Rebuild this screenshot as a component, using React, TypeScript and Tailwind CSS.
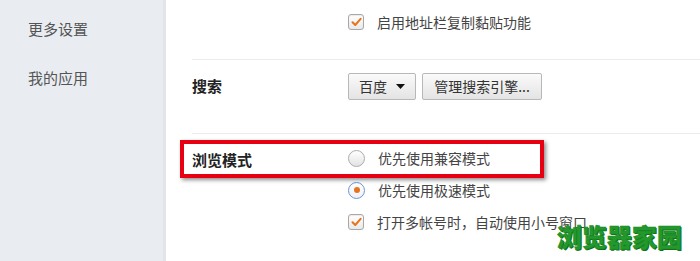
import React from 'react';

const font = { fontFamily: '"Noto Sans CJK SC", "Noto Sans", sans-serif' };

const CheckBox = () => (
  <span className="flex h-[16px] w-[16px] items-center justify-center rounded-[3px] border border-[#a8a8a8] bg-gradient-to-b from-[#ffffff] to-[#e9e9e9] shadow-[inset_0_1px_1px_rgba(0,0,0,0.08)]">
    <svg width="11" height="10" viewBox="0 0 11 10">
      <path d="M1.5 5.2 L4.3 8 L9.6 1.8" fill="none" stroke="#e8731e" strokeWidth="2" strokeLinecap="round" strokeLinejoin="round" />
    </svg>
  </span>
);

const Radio = ({ checked }: { checked?: boolean }) => (
  <span
    className={
      checked
        ? 'flex h-[17px] w-[17px] items-center justify-center rounded-full border border-[#6f93d6] bg-gradient-to-b from-[#ffffff] to-[#edf1f7]'
        : 'flex h-[17px] w-[17px] items-center justify-center rounded-full border border-[#ababab] bg-gradient-to-b from-[#ffffff] to-[#e3e3e3]'
    }
  >
    {checked && <span className="h-[6px] w-[6px] rounded-full bg-[#e8731e]" />}
  </span>
);

const Option = ({ control, text }: { control: React.ReactNode; text: string }) => (
  <div className="flex h-[32px] items-center">
    {control}
    <span className="ml-[13px] text-[14px] text-[#444]">{text}</span>
  </div>
);

export default function App() {
  return (
    <div className="relative flex h-[261px] w-[700px] overflow-hidden bg-white" style={font}>
      <aside className="w-[166px] shrink-0 border-r-[3px] border-[#e1e5ea] bg-[#e9edf2]">
        <div className="pl-[28px] pt-[18px] text-[15px] leading-[22px] text-[#555]">更多设置</div>
        <div className="pl-[28px] pt-[27px] text-[15px] leading-[22px] text-[#555]">我的应用</div>
      </aside>

      <main className="flex-1 pl-[26px]">
        <section className="flex h-[60px] border-b border-[#ececec]">
          <div className="w-[156px]" />
          <div className="pt-[6px]">
            <Option control={<CheckBox />} text="启用地址栏复制黏贴功能" />
          </div>
        </section>

        <section className="flex h-[74px] border-b border-[#ececec] pt-[13px]">
          <div className="flex h-[27px] w-[156px] items-center text-[15px] font-bold text-[#222]">搜索</div>
          <div className="flex gap-[6px]">
            <button className="flex h-[27px] w-[68px] items-center justify-center gap-[9px] rounded-[2px] border border-[#b8b8b8] bg-gradient-to-b from-[#fafafa] to-[#e4e4e4] text-[14px] text-[#333]">
              百度
              <svg width="9" height="5" viewBox="0 0 9 5">
                <path d="M0 0 L9 0 L4.5 5 Z" fill="#111" />
              </svg>
            </button>
            <button className="flex h-[27px] w-[120px] items-center justify-center rounded-[2px] border border-[#b8b8b8] bg-gradient-to-b from-[#fafafa] to-[#e4e4e4] text-[14px] text-[#333]">
              管理搜索引擎...
            </button>
          </div>
        </section>

        <section className="relative flex pt-[8px]">
          <div className="flex h-[32px] w-[156px] items-center pt-[5px] text-[15px] font-bold text-[#222]">浏览模式</div>
          <div>
            <Option control={<Radio />} text="优先使用兼容模式" />
            <Option control={<Radio checked />} text="优先使用极速模式" />
            <Option control={<CheckBox />} text="打开多帐号时，自动使用小号窗口" />
          </div>
          <div className="absolute left-[-12px] top-[6px] h-[38px] w-[364px] border-[4px] border-[#e60012] shadow-[2px_2px_4px_rgba(0,0,0,0.45)]" />
        </section>
      </main>

      <div className="absolute left-[557px] top-[220px] text-[25px] font-black leading-[32px] text-[#23982c] [-webkit-text-stroke:0.6px_#1a8a24] [text-shadow:1px_1px_0_#0d6a16]">
        浏览器家园
      </div>
    </div>
  );
}
